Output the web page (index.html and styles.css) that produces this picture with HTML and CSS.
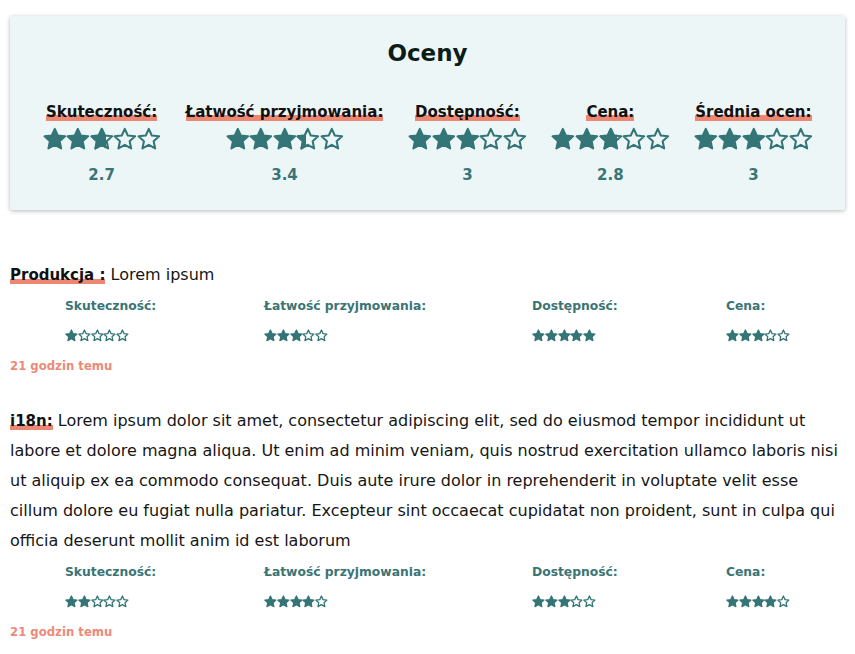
FILE: index.html
```html
<!DOCTYPE html>
<html lang="pl">
<head>
<meta charset="utf-8">
<title>Oceny</title>
<link rel="stylesheet" href="styles.css">
</head>
<body>
<svg class="defs" aria-hidden="true">
  <symbol id="star" viewBox="0 0 24 24"><path d="M12 1.9L15.06 8.69L22.46 9.5L16.95 14.51L18.47 21.8L12 18.1L5.53 21.8L7.05 14.51L1.54 9.5L8.94 8.69Z"/></symbol>
</svg>

<section class="card">
  <h1 class="title">Oceny</h1>
  <div class="summary">
    <div class="metric">
      <div class="metric-label"><span class="hl">Skuteczność:</span></div>
      <div class="stars lg">
        <svg class="s on"><use href="#star"/></svg><svg class="s on"><use href="#star"/></svg><span class="part"><svg class="s"><use href="#star"/></svg><span class="fill" style="width:70%"><svg class="s on"><use href="#star"/></svg></span></span><svg class="s"><use href="#star"/></svg><svg class="s"><use href="#star"/></svg>
      </div>
      <div class="value">2.7</div>
    </div>
    <div class="metric">
      <div class="metric-label"><span class="hl">Łatwość przyjmowania:</span></div>
      <div class="stars lg">
        <svg class="s on"><use href="#star"/></svg><svg class="s on"><use href="#star"/></svg><svg class="s on"><use href="#star"/></svg><span class="part"><svg class="s"><use href="#star"/></svg><span class="fill" style="width:42%"><svg class="s on"><use href="#star"/></svg></span></span><svg class="s"><use href="#star"/></svg>
      </div>
      <div class="value">3.4</div>
    </div>
    <div class="metric">
      <div class="metric-label"><span class="hl">Dostępność:</span></div>
      <div class="stars lg">
        <svg class="s on"><use href="#star"/></svg><svg class="s on"><use href="#star"/></svg><svg class="s on"><use href="#star"/></svg><svg class="s"><use href="#star"/></svg><svg class="s"><use href="#star"/></svg>
      </div>
      <div class="value">3</div>
    </div>
    <div class="metric">
      <div class="metric-label"><span class="hl">Cena:</span></div>
      <div class="stars lg">
        <svg class="s on"><use href="#star"/></svg><svg class="s on"><use href="#star"/></svg><span class="part"><svg class="s"><use href="#star"/></svg><span class="fill" style="width:80%"><svg class="s on"><use href="#star"/></svg></span></span><svg class="s"><use href="#star"/></svg><svg class="s"><use href="#star"/></svg>
      </div>
      <div class="value">2.8</div>
    </div>
    <div class="metric">
      <div class="metric-label"><span class="hl">Średnia ocen:</span></div>
      <div class="stars lg">
        <svg class="s on"><use href="#star"/></svg><svg class="s on"><use href="#star"/></svg><svg class="s on"><use href="#star"/></svg><svg class="s"><use href="#star"/></svg><svg class="s"><use href="#star"/></svg>
      </div>
      <div class="value">3</div>
    </div>
  </div>
</section>

<article class="review">
  <p class="review-text"><strong class="hl hl-sm">Produkcja :</strong> Lorem ipsum</p>
  <div class="ratings">
    <div class="r-label">Skuteczność:</div>
    <div class="r-label">Łatwość przyjmowania:</div>
    <div class="r-label">Dostępność:</div>
    <div class="r-label">Cena:</div>
    <div class="stars sm"><svg class="s on"><use href="#star"/></svg><svg class="s"><use href="#star"/></svg><svg class="s"><use href="#star"/></svg><svg class="s"><use href="#star"/></svg><svg class="s"><use href="#star"/></svg></div>
    <div class="stars sm"><svg class="s on"><use href="#star"/></svg><svg class="s on"><use href="#star"/></svg><svg class="s on"><use href="#star"/></svg><svg class="s"><use href="#star"/></svg><svg class="s"><use href="#star"/></svg></div>
    <div class="stars sm"><svg class="s on"><use href="#star"/></svg><svg class="s on"><use href="#star"/></svg><svg class="s on"><use href="#star"/></svg><svg class="s on"><use href="#star"/></svg><svg class="s on"><use href="#star"/></svg></div>
    <div class="stars sm"><svg class="s on"><use href="#star"/></svg><svg class="s on"><use href="#star"/></svg><svg class="s on"><use href="#star"/></svg><svg class="s"><use href="#star"/></svg><svg class="s"><use href="#star"/></svg></div>
  </div>
  <div class="time">21 godzin temu</div>
</article>

<article class="review">
  <p class="review-text"><strong class="hl hl-sm">i18n:</strong> Lorem ipsum dolor sit amet, consectetur adipiscing elit, sed do eiusmod tempor incididunt ut labore et dolore magna aliqua. Ut enim ad minim veniam, quis nostrud exercitation ullamco laboris nisi ut aliquip ex ea commodo consequat. Duis aute irure dolor in reprehenderit in voluptate velit esse cillum dolore eu fugiat nulla pariatur. Excepteur sint occaecat cupidatat non proident, sunt in culpa qui officia deserunt mollit anim id est laborum</p>
  <div class="ratings">
    <div class="r-label">Skuteczność:</div>
    <div class="r-label">Łatwość przyjmowania:</div>
    <div class="r-label">Dostępność:</div>
    <div class="r-label">Cena:</div>
    <div class="stars sm"><svg class="s on"><use href="#star"/></svg><svg class="s on"><use href="#star"/></svg><svg class="s"><use href="#star"/></svg><svg class="s"><use href="#star"/></svg><svg class="s"><use href="#star"/></svg></div>
    <div class="stars sm"><svg class="s on"><use href="#star"/></svg><svg class="s on"><use href="#star"/></svg><svg class="s on"><use href="#star"/></svg><svg class="s on"><use href="#star"/></svg><svg class="s"><use href="#star"/></svg></div>
    <div class="stars sm"><svg class="s on"><use href="#star"/></svg><svg class="s on"><use href="#star"/></svg><svg class="s on"><use href="#star"/></svg><svg class="s"><use href="#star"/></svg><svg class="s"><use href="#star"/></svg></div>
    <div class="stars sm"><svg class="s on"><use href="#star"/></svg><svg class="s on"><use href="#star"/></svg><svg class="s on"><use href="#star"/></svg><svg class="s on"><use href="#star"/></svg><svg class="s"><use href="#star"/></svg></div>
  </div>
  <div class="time">21 godzin temu</div>
</article>
</body>
</html>
```
FILE: styles.css
```css
* { box-sizing: border-box; }

body {
  margin: 0;
  padding: 16px 10px 0;
  font-family: "DejaVu Sans", "Liberation Sans", sans-serif;
  color: #161616;
  background: #ffffff;
}

.defs { position: absolute; width: 0; height: 0; overflow: hidden; }

/* highlight bar under headings */
.hl { box-shadow: inset 0 -6px 0 #ee8674; }
.hl-sm { box-shadow: inset 0 -5px 0 #ee8674; }

/* summary card */
.card {
  background: #edf6f6;
  border-radius: 2px;
  box-shadow: 0 1px 4px rgba(0, 0, 0, 0.28);
  padding: 22px 0 24px;
  margin-bottom: 50px;
}

.title {
  margin: 0 0 33px;
  text-align: center;
  font-size: 23px;
  line-height: 30px;
  font-weight: 700;
  color: #0c1c18;
}

.summary {
  display: flex;
  justify-content: center;
  gap: 25px;
}

.metric {
  display: flex;
  flex-direction: column;
  align-items: center;
  min-width: 118px;
}

.metric-label {
  font-size: 15px;
  line-height: 22px;
  font-weight: 700;
  color: #111;
  white-space: nowrap;
}

.value {
  margin-top: 13px;
  font-size: 15px;
  line-height: 22px;
  font-weight: 700;
  color: #3a7576;
}

/* stars */
.stars { display: flex; align-items: center; }
.stars.lg { margin-top: 4px; height: 24px; }
.stars.sm { height: 28px; }

.s {
  display: block;
  overflow: visible;
  fill: none;
  stroke: #347577;
  stroke-width: 2.1;
  stroke-linejoin: round;
}
.s.on { fill: #347577; }

.lg .s { width: 23.6px; height: 23.6px; }
.sm .s { width: 12.8px; height: 12.8px; stroke-width: 2.4; }

.part { position: relative; display: block; }
.fill {
  position: absolute;
  left: 0;
  top: 0;
  height: 100%;
  overflow: hidden;
}

/* reviews */
.review + .review { margin-top: 25px; }

.review-text {
  margin: 0;
  font-size: 16px;
  line-height: 30px;
  color: #161616;
}
.review-text strong { font-size: 15px; font-weight: 700; color: #111; }

.ratings {
  display: grid;
  grid-template-columns: 199px 268px 194px 1fr;
  margin: 1px 0 0 55px;
}

.r-label {
  font-size: 12.3px;
  line-height: 30px;
  font-weight: 700;
  color: #3a7475;
  white-space: nowrap;
}

.time {
  margin-top: 2px;
  font-size: 11.7px;
  line-height: 30px;
  font-weight: 700;
  color: #ec8a78;
}
```
